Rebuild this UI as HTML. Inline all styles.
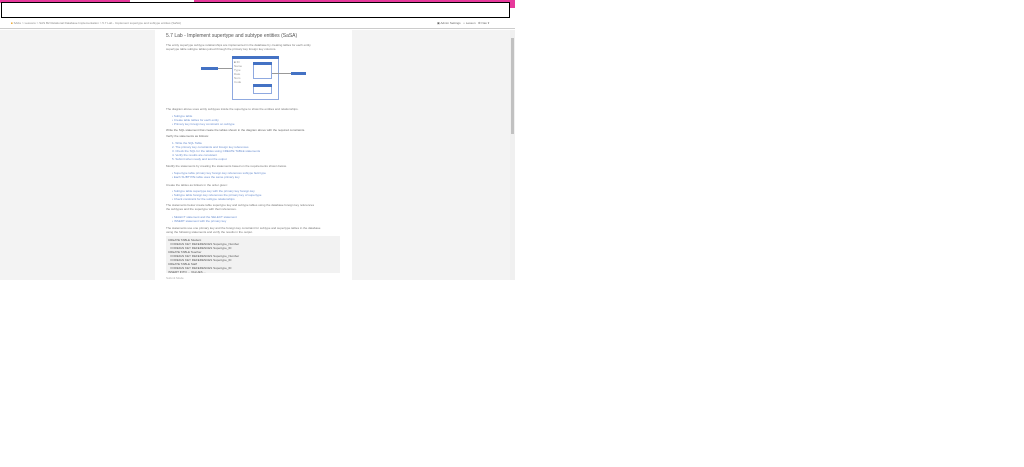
<!DOCTYPE html>
<html><head><meta charset="utf-8"><style>
*{margin:0;padding:0;box-sizing:border-box}
body{width:1024px;height:467px;background:#fff;position:relative;overflow:hidden;font-family:"Liberation Sans",sans-serif}
.a{position:absolute}
.t{position:absolute;font-size:3px;line-height:4px;color:#777;white-space:nowrap}
.l{color:#6b8fd0}
.b{background:#4472c4}
</style></head><body>
<div class="a" style="left:0;top:0;width:130px;height:3px;background:#e6399b"></div>
<div class="a" style="left:194px;top:0;width:321px;height:3px;background:#e6399b"></div>
<div class="a" style="left:509px;top:0;width:6px;height:8px;background:#e6399b"></div>
<div class="a" style="left:1px;top:2px;width:509px;height:16px;border:1px solid #000;background:#fff"></div>
<div class="a" style="left:0;top:18px;width:515px;height:11px;background:#fff;border-bottom:1px solid #ccc"></div>
<div class="t" style="left:11px;top:21px;color:#888"><span style="color:#e8a020">■</span> SAFe <span>&gt; Lessons &gt; SAS B2 Relational Database Implementation &gt; 5.7 Lab - Implement supertype and subtype entities (SaSA)</span></div>
<div class="t" style="left:437px;top:21px;color:#666">▣ Admin Settings &nbsp; ⌂ Lesson &nbsp; ⚙ Nav ▾</div>
<div class="a" style="left:0;top:30px;width:515px;height:250px;background:#f3f3f3"></div>
<div class="a" style="left:155px;top:30px;width:197px;height:250px;background:#fff"></div>
<div class="a" style="left:510px;top:30px;width:5px;height:250px;background:#f0f0f0"></div>
<div class="a" style="left:511px;top:38px;width:3px;height:96px;background:#c1c1c1"></div>
<div class="t" style="left:166px;top:33px;font-size:5px;line-height:6px;color:#555">5.7 Lab - Implement supertype and subtype entities (SaSA)</div>
<div class="t" style="left:166px;top:43px">The entity supertype subtype relationships are implemented in the database by creating tables for each entity</div>
<div class="t" style="left:166px;top:47px">supertype table subtype tables joined through the primary key foreign key columns.</div>
<div class="a" style="left:232px;top:56px;width:47px;height:44px;border:1px solid #8fa9e0"></div>
<div class="a b" style="left:232px;top:56px;width:47px;height:3px"></div>
<div class="a" style="left:253px;top:62px;width:19px;height:17px;border:1px solid #8fa9e0"></div>
<div class="a b" style="left:253px;top:62px;width:19px;height:3px"></div>
<div class="a" style="left:253px;top:84px;width:19px;height:10px;border:1px solid #8fa9e0"></div>
<div class="a b" style="left:253px;top:84px;width:19px;height:3px"></div>
<div class="a b" style="left:201px;top:67px;width:17px;height:3px"></div>
<div class="a b" style="left:291px;top:72px;width:15px;height:3px"></div>
<div class="a" style="left:218px;top:68px;width:14px;height:1px;background:#999"></div>
<div class="a" style="left:272px;top:73px;width:19px;height:1px;background:#999"></div>
<div class="t" style="left:234px;top:60px;line-height:4px;color:#999">■ ID<br>Name<br>Type<br>Date<br>Num<br>Code</div>
<div class="t" style="left:166px;top:107px">The diagram above uses entity subtypes inside the supertype to show the entities and relationships.</div>
<div class="t l" style="left:172px;top:114px">• Subtype table<br>• Create table tables for each entity<br>• Primary key foreign key constraint on subtype</div>
<div class="t" style="left:166px;top:128px;color:#666">Write the SQL statement that create the tables shown in the diagram above with the required constraints.</div>
<div class="t" style="left:166px;top:134px;color:#666">Verify the statements as follows:</div>
<div class="t l" style="left:172px;top:141px">1. Write the SQL Table<br>2. The primary key constraints and foreign key references<br>3. Check the SQL for the tables using CREATE TABLE statements<br>4. Verify the results are consistent<br>5. Submit when ready and test the output</div>
<div class="t" style="left:166px;top:164px">Modify the statements by creating the statements based on the requirements shown below.</div>
<div class="t l" style="left:172px;top:171px">• Supertype table primary key foreign key references subtype field type<br>• Each SUBTYPE table uses the same primary key</div>
<div class="t" style="left:166px;top:183px">Create the tables as follows in the order given:</div>
<div class="t l" style="left:172px;top:189px">• Subtype table supertype key with the primary key foreign key<br>• Subtype table foreign key references the primary key of supertype<br>• Check constraint for the subtype relationships</div>
<div class="t" style="left:166px;top:203px">The statements below create table supertype key and subtype tables using the database foreign key references<br>the subtypes and the supertype with their references.</div>
<div class="t l" style="left:172px;top:215px">• SELECT statement and the SELECT statement<br>• INSERT statement with the primary key</div>
<div class="t" style="left:166px;top:226px">The statements use one primary key and the foreign key constraint for subtype and supertype tables in the database<br>using the following statements and verify the results in the output.</div>
<div class="a" style="left:166px;top:236px;width:174px;height:37px;background:#f2f2f2"></div>
<div class="t" style="left:168px;top:238px;color:#555">CREATE TABLE Student<br>&nbsp;&nbsp;&nbsp;FOREIGN KEY REFERENCES Supertype_Number<br>&nbsp;&nbsp;&nbsp;FOREIGN KEY REFERENCES Supertype_ID<br>CREATE TABLE Teacher<br>&nbsp;&nbsp;&nbsp;FOREIGN KEY REFERENCES Supertype_Number<br>&nbsp;&nbsp;&nbsp;FOREIGN KEY REFERENCES Supertype_ID<br>CREATE TABLE Staff<br>&nbsp;&nbsp;&nbsp;FOREIGN KEY REFERENCES Supertype_ID<br>INSERT INTO ... VALUES ...</div>
<div class="t" style="left:166px;top:276px;color:#aaa">Submit Mode</div>
</body></html>
